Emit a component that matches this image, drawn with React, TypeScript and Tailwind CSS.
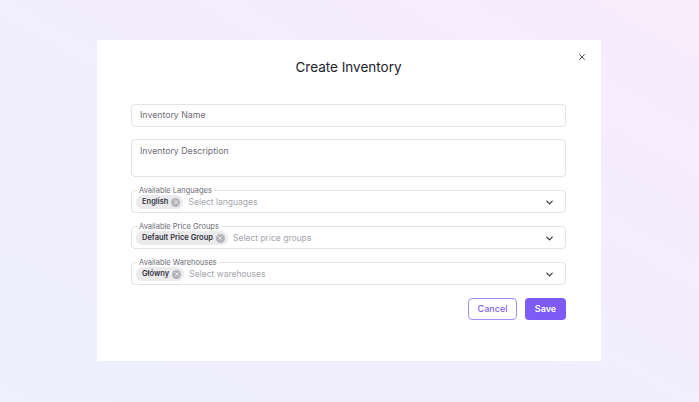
import { X, ChevronDown } from 'lucide-react';

type Chip = { legend: string; chip: string; placeholder: string };

const selects: Chip[] = [
  { legend: 'Available Languages', chip: 'English', placeholder: 'Select languages' },
  { legend: 'Available Price Groups', chip: 'Default Price Group', placeholder: 'Select price groups' },
  { legend: 'Available Warehouses', chip: 'Główny', placeholder: 'Select warehouses' },
];

function ChipRemove() {
  return (
    <span className="flex h-[9px] w-[9px] items-center justify-center rounded-full bg-[#b4b4bb]">
      <X size={6} strokeWidth={3.5} className="text-[#ececef]" />
    </span>
  );
}

function MultiSelect({ legend, chip, placeholder }: Chip) {
  return (
    <div className="relative flex h-[23px] items-center rounded-[4px] border border-[#e2e2e6] pl-[4px] pr-[10px]">
      {/* notched label on the border */}
      <span className="absolute -top-[4px] left-[5px] bg-white px-[2px] text-[7.5px] leading-[8px] text-[#6b6b76]">
        {legend}
      </span>
      <div className="mt-[1px] flex flex-1 items-center">
        <span className="flex h-[14px] items-center gap-[3px] rounded-full bg-[#ebebee] pl-[6px] pr-[3px] text-[7.5px] font-semibold text-[#33333e]">
          {chip}
          <ChipRemove />
        </span>
        <span className="ml-[5px] flex-1 text-[8.5px] text-[#a5a5ae]">{placeholder}</span>
        <ChevronDown size={11} strokeWidth={2.5} className="text-[#2d2d3a]" />
      </div>
    </div>
  );
}

export default function App() {
  return (
    <div
      className="h-[402px] w-[699px] bg-gradient-to-bl from-[#f8ebfc] via-[#f1eefd] to-[#efeffd] pl-[97px] pt-[40px]"
      style={{ fontFamily: 'Inter, "Noto Sans", sans-serif' }}
    >
      <div className="relative h-[321px] w-[504px] bg-white pl-[34px] pr-[35px] pt-[17px]">
        <button className="absolute right-[14px] top-[12px] text-[#3a3a48]">
          <X size={10} strokeWidth={2} />
        </button>
        <h2 className="text-center text-[13.5px] font-normal leading-[20px] text-[#22222e]">Create Inventory</h2>

        <div className="mt-[27px] flex flex-col">
          <div className="flex h-[23px] items-center rounded-[4px] border border-[#e2e2e6] px-[8px] text-[8.75px] text-[#6e6e78]">
            Inventory Name
          </div>
          <div className="mt-[12px] h-[38px] rounded-[4px] border border-[#e2e2e6] px-[8px] pt-[5px] text-[8.75px] text-[#6e6e78]">
            Inventory Description
          </div>
          <div className="mt-[13px] flex flex-col gap-[13px]">
            {selects.map(s => (
              <MultiSelect key={s.legend} {...s} />
            ))}
          </div>
          <div className="mt-[13px] flex justify-end gap-[8px]">
            <button className="h-[22px] w-[49px] rounded-[4px] border border-[#a88ef9] text-[9px] font-medium text-[#8062f2]">
              Cancel
            </button>
            <button className="h-[22px] w-[41px] rounded-[4px] bg-[#7c5cf4] text-[9px] font-semibold text-white">
              Save
            </button>
          </div>
        </div>
      </div>
    </div>
  );
}
